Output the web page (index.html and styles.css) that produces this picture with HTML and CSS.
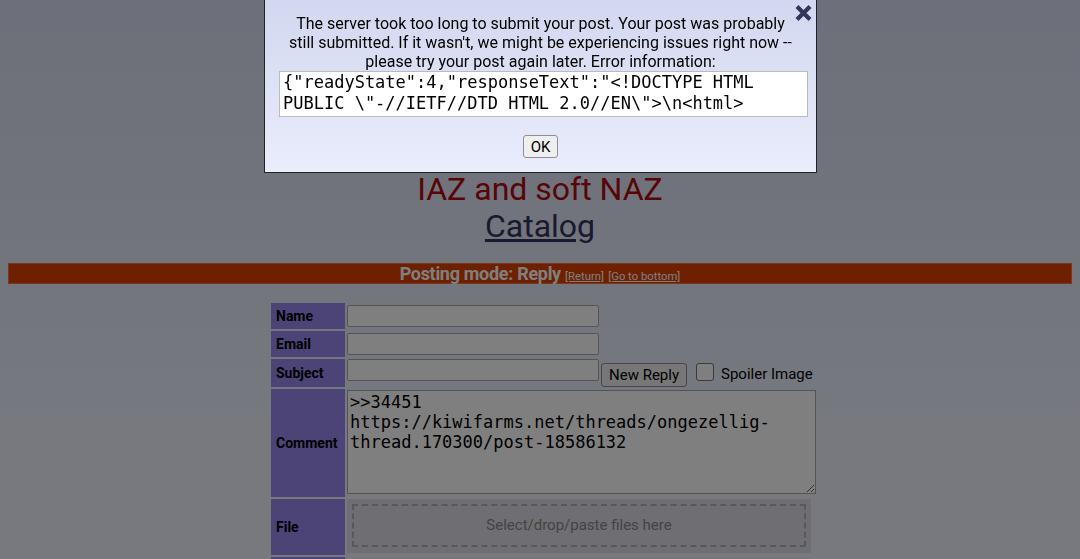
FILE: index.html
```html
<!DOCTYPE html>
<html>
<head>
    <title>IAZ and soft NAZ</title>
    <link rel="stylesheet" href="styles.css">
</head>
<body class="modal-open">
    <header class="board-header">
        <h1>IAZ and soft NAZ</h1>
        <a class="catalog-link" href="#">Catalog</a>
    </header>

    <div class="banner">Posting mode: Reply <a href="#">[Return]</a> <a href="#">[Go to bottom]</a></div>

    <form class="post-form">
        <table>
            <tr>
                <th>Name</th>
                <td><input type="text" class="field"></td>
            </tr>
            <tr>
                <th>Email</th>
                <td><input type="text" class="field"></td>
            </tr>
            <tr>
                <th>Subject</th>
                <td class="subject-cell">
                    <div class="subject-line">
                        <input type="text" class="field">
                        <button type="button" class="submit-btn">New Reply</button>
                        <label class="spoiler"><span class="checkbox"></span>Spoiler Image</label>
                    </div>
                </td>
            </tr>
            <tr>
                <th>Comment</th>
                <td class="comment-cell"><textarea class="comment" spellcheck="false">&gt;&gt;34451
https://kiwifarms.net/threads/ongezellig-thread.170300/post-18586132</textarea></td>
            </tr>
            <tr>
                <th>File</th>
                <td class="file-cell">
                    <div class="dropzone-wrap">
                        <div class="dropzone">Select/drop/paste files here</div>
                    </div>
                </td>
            </tr>
            <tr class="cut-row">
                <th></th>
                <td><input type="text" class="field short"></td>
            </tr>
        </table>
    </form>

    <!-- alerta por cima da página -->
    <div class="overlay"></div>
    <div class="alert">
        <a class="alert-close" href="#">
            <svg width="17" height="16" viewBox="0 0 17 16"><path d="M3.5 3 L13.5 13 M13.5 3 L3.5 13" stroke="#34345c" stroke-width="4.2" stroke-linecap="square" fill="none"/></svg>
        </a>
        <p class="alert-text">The server took too long to submit your post. Your post was probably still submitted. If it wasn't, we might be experiencing issues right now -- please try your post again later. Error information:</p>
        <textarea class="alert-info" readonly>{"readyState":4,"responseText":"&lt;!DOCTYPE HTML PUBLIC \"-//IETF//DTD HTML 2.0//EN\"&gt;\n&lt;html&gt; &lt;head&gt;\n&lt;title&gt;504 Gateway Time-out&lt;/title&gt;\n&lt;/head&gt; &lt;body&gt;\n&lt;h1&gt;Gateway Time-out&lt;/h1&gt;\n&lt;p&gt;The gateway did not receive a timely response from the upstream server or application.&lt;/p&gt;\n&lt;/body&gt;&lt;/html&gt;\n","status":504,"statusText":"Gateway Time-out"}</textarea>
        <div class="alert-actions">
            <button type="button" class="ok-btn">OK</button>
        </div>
    </div>
</body>
</html>
```

FILE: styles.css
```css
body {
    margin: 0 8px;
    font-family: Roboto, "Liberation Sans", sans-serif;
    color: #000;
    background: #eef2ff linear-gradient(#dadef4 0px, #eef2ff 420px) no-repeat;
    min-height: 100vh;
}

body.modal-open {
    overflow: hidden;
}

.board-header {
    padding-top: 170px;
    text-align: center;
}

.board-header h1 {
    margin: 0;
    font-size: 32px;
    font-weight: normal;
    line-height: 38px;
    color: #af0a0f;
}

.catalog-link {
    display: inline-block;
    font-size: 32px;
    line-height: 37px;
    color: #34345c;
}

.banner {
    margin-top: 18px;
    height: 19px;
    background: #dc4000;
    border: 1px solid #ee6e40;
    color: #fff;
    text-align: center;
    font-size: 18px;
    font-weight: bold;
    line-height: 19px;
    letter-spacing: -0.3px;
}

.banner a {
    color: #fff;
    font-size: 11.3px;
    font-weight: normal;
    letter-spacing: 0;
}

.post-form {
    margin-top: 17px;
}

.post-form table {
    margin: 0 auto;
    border-spacing: 2px;
    position: relative;
    left: 4px;
}

.post-form th {
    width: 64px;
    padding: 0 5px;
    background: #9988ee;
    text-align: left;
    font-size: 14px;
    font-weight: bold;
}

.post-form td {
    width: 470px;
    padding: 2px 0;
    vertical-align: top;
}

.field {
    display: block;
    box-sizing: border-box;
    width: 252px;
    height: 22px;
    margin: 0;
    border: 1px solid #a9a9a9;
    border-radius: 2px;
    background: #fff;
}

.field.short {
    width: 145px;
}

.post-form td.subject-cell {
    padding: 0;
}

.subject-line {
    display: flex;
    align-items: flex-start;
}

.submit-btn {
    margin: 4px 0 0 2px;
    height: 24px;
    padding: 0 7px;
    font-family: Roboto, "Liberation Sans", sans-serif;
    font-size: 15px;
    background: #efefef;
    border: 1px solid #8f8f8f;
    border-radius: 3px;
    color: #000;
}

.spoiler {
    display: flex;
    align-items: flex-start;
    margin: 5px 0 0 9px;
    font-size: 15px;
    line-height: 20px;
    gap: 7px;
}

.checkbox {
    width: 16px;
    height: 16px;
    margin-top: -1px;
    border: 1px solid #767676;
    border-radius: 3px;
    background: #fff;
}

.post-form td.comment-cell {
    padding: 1px 0 3px;
}

.comment {
    display: block;
    box-sizing: border-box;
    width: 469px;
    height: 104px;
    margin: 0;
    padding: 1px 2px;
    border: 1px solid #a9a9a9;
    background: #fff;
    font-family: "DejaVu Sans Mono", monospace;
    font-size: 17px;
    line-height: 20px;
    color: #000;
}

.post-form td.file-cell {
    padding: 0 0 2px;
}

.dropzone-wrap {
    margin-right: 6px;
    padding: 5px 5px 6px;
    background: #dcdde6;
}

.dropzone {
    height: 39px;
    border: 2px dashed #b0b0b8;
    text-align: center;
    font-size: 15px;
    line-height: 39px;
    color: #888;
}

.overlay {
    position: fixed;
    top: 0;
    left: 0;
    right: 0;
    bottom: 0;
    background: rgba(0, 0, 0, 0.5);
}

.alert {
    position: fixed;
    top: -1px;
    left: 264px;
    width: 553px;
    box-sizing: border-box;
    padding: 15px 13px 14px;
    border: 1px solid #222;
    background: linear-gradient(#d3d7ef, #eaedfc);
    text-align: center;
    z-index: 10;
}

.alert-close {
    position: absolute;
    top: 5px;
    right: 4px;
    line-height: 0;
}

.alert-text {
    margin: 0 4px;
    font-size: 16px;
    line-height: 18.75px;
}

.alert-info {
    display: block;
    box-sizing: border-box;
    width: 529px;
    height: 46px;
    margin: 0 0 0 1px;
    padding: 0 3px;
    border: 1px solid #bbb;
    background: #fff;
    resize: none;
    font-family: "DejaVu Sans Mono", monospace;
    font-size: 17px;
    line-height: 21px;
    color: #000;
}

.alert-info::-webkit-scrollbar {
    width: 5px;
}

.alert-info::-webkit-scrollbar-thumb {
    background: #aaa;
}

.alert-actions {
    margin-top: 18px;
}

.ok-btn {
    height: 23px;
    padding: 0 7px;
    font-family: Roboto, "Liberation Sans", sans-serif;
    font-size: 15px;
    background: #efefef;
    border: 1px solid #8f8f8f;
    border-radius: 3px;
    color: #000;
}
```
